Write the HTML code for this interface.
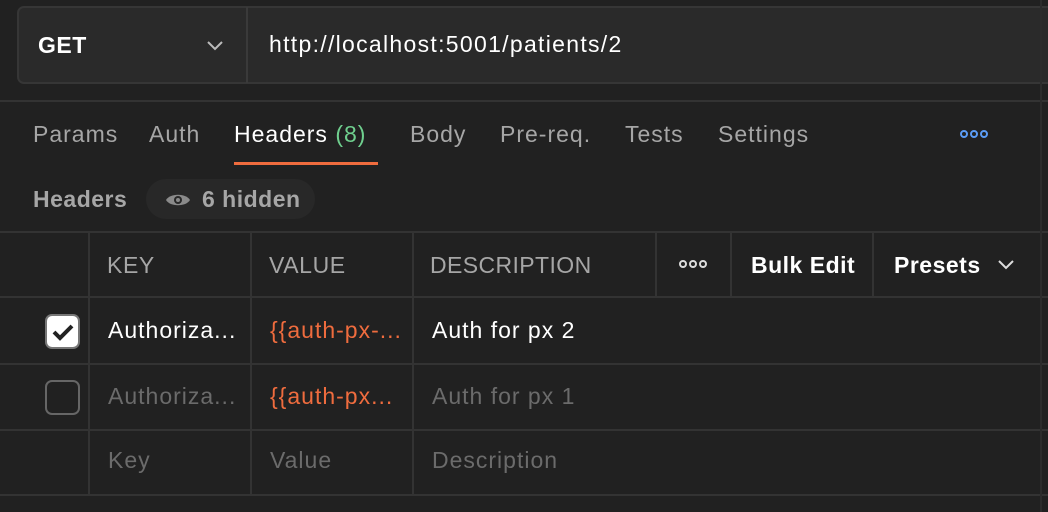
<!DOCTYPE html>
<html><head><style>
*{margin:0;padding:0;box-sizing:border-box}
body{width:1048px;height:512px;background:#212121;font-family:"Liberation Sans",sans-serif;color:#fff;position:relative;overflow:hidden}
.a{position:absolute;white-space:nowrap;letter-spacing:1px}
.a[style*="bold"]{letter-spacing:0.5px}
.hl{position:absolute;height:2px;background:#333}
.vl{position:absolute;width:2px;background:#333}
</style></head><body>
<div class="a" style="left:17px;top:6px;width:1050px;height:78px;background:#2a2a2a;border:2px solid #363636;border-radius:7px"></div>
<div class="vl" style="left:246px;top:7px;height:76px;background:#3a3a3a"></div>
<div class="a" style="left:38px;top:32px;font-size:23px;font-weight:bold">GET</div>
<svg class="a" style="left:206px;top:40px" width="18" height="12"><path d="M2 2l7 7 7-7" stroke="#bbb" stroke-width="2" fill="none"/></svg>
<div class="a" style="left:269px;top:31px;font-size:23px;letter-spacing:1.3px">http://localhost:5001/patients/2</div>
<div class="hl" style="left:0;top:100px;width:1048px"></div>
<div class="a" style="left:33px;top:121px;font-size:23px;color:#a6a6a6">Params</div>
<div class="a" style="left:149px;top:121px;font-size:23px;color:#a6a6a6">Auth</div>
<div class="a" style="left:234px;top:121px;font-size:23px">Headers <span style="color:#6fcf8e">(8)</span></div>
<div class="a" style="left:234px;top:162px;width:144px;height:3px;background:#ef6c3e"></div>
<div class="a" style="left:410px;top:121px;font-size:23px;color:#a6a6a6">Body</div>
<div class="a" style="left:500px;top:121px;font-size:23px;color:#a6a6a6">Pre-req.</div>
<div class="a" style="left:625px;top:121px;font-size:23px;color:#a6a6a6">Tests</div>
<div class="a" style="left:718px;top:121px;font-size:23px;color:#a6a6a6">Settings</div>
<svg class="a" style="left:959px;top:129px" width="30" height="10"><g fill="none" stroke="#5b9cf5" stroke-width="2"><circle cx="5" cy="5" r="3"/><circle cx="15" cy="5" r="3"/><circle cx="25" cy="5" r="3"/></g></svg>
<div class="a" style="left:33px;top:186px;font-size:23px;font-weight:bold;color:#a6a6a6">Headers</div>
<div class="a" style="left:146px;top:179px;width:169px;height:40px;background:#282828;border-radius:20px"></div>
<svg class="a" style="left:165px;top:191px" width="26" height="18"><path d="M1 9C5 2 21 2 25 9C21 16 5 16 1 9Z" fill="#8a8a8a"/><circle cx="13" cy="9" r="4" fill="#282828"/><circle cx="13" cy="9" r="2" fill="#8a8a8a"/></svg>
<div class="a" style="left:202px;top:186px;font-size:23px;font-weight:bold;color:#a6a6a6">6 hidden</div>
<div class="hl" style="left:0;top:231px;width:1048px"></div>
<div class="hl" style="left:0;top:296px;width:1048px"></div>
<div class="hl" style="left:0;top:363px;width:1048px"></div>
<div class="hl" style="left:0;top:429px;width:1048px"></div>
<div class="hl" style="left:0;top:494px;width:1048px"></div>
<div class="vl" style="left:88px;top:232px;height:264px"></div>
<div class="vl" style="left:250px;top:232px;height:264px"></div>
<div class="vl" style="left:412px;top:232px;height:264px"></div>
<div class="vl" style="left:655px;top:232px;height:65px"></div>
<div class="vl" style="left:730px;top:232px;height:65px"></div>
<div class="vl" style="left:872px;top:232px;height:65px"></div>
<div class="vl" style="left:1040px;top:0;height:512px;background:#2c2c2c"></div>
<div class="a" style="left:107px;top:252px;font-size:23px;color:#a6a6a6;letter-spacing:0.6px">KEY</div>
<div class="a" style="left:269px;top:252px;font-size:23px;color:#a6a6a6;letter-spacing:0.6px">VALUE</div>
<div class="a" style="left:430px;top:252px;font-size:23px;color:#a6a6a6;letter-spacing:0.4px">DESCRIPTION</div>
<svg class="a" style="left:678px;top:259px" width="30" height="10"><g fill="none" stroke="#ddd" stroke-width="2"><circle cx="5" cy="5" r="3"/><circle cx="15" cy="5" r="3"/><circle cx="25" cy="5" r="3"/></g></svg>
<div class="a" style="left:751px;top:252px;font-size:23px;font-weight:bold">Bulk Edit</div>
<div class="a" style="left:894px;top:252px;font-size:23px;font-weight:bold">Presets</div>
<svg class="a" style="left:997px;top:259px" width="18" height="12"><path d="M2 2l7 7 7-7" stroke="#ddd" stroke-width="2" fill="none"/></svg>
<div class="a" style="left:45px;top:314px;width:35px;height:35px;background:#fff;border:2px solid #777;border-radius:7px"></div>
<svg class="a" style="left:49px;top:318px" width="28" height="28"><path d="M5 14l6 6 12-12" stroke="#222" stroke-width="4" fill="none"/></svg>
<div class="a" style="left:108px;top:317px;font-size:23px">Authoriza...</div>
<div class="a" style="left:270px;top:317px;font-size:23px;color:#ef6c3e">{{auth-px-...</div>
<div class="a" style="left:432px;top:317px;font-size:23px">Auth for px 2</div>
<div class="a" style="left:45px;top:380px;width:35px;height:35px;border:2px solid #666;border-radius:7px"></div>
<div class="a" style="left:108px;top:383px;font-size:23px;color:#6b6b6b">Authoriza...</div>
<div class="a" style="left:270px;top:383px;font-size:23px;color:#ef6c3e">{{auth-px...</div>
<div class="a" style="left:432px;top:383px;font-size:23px;color:#6b6b6b">Auth for px 1</div>
<div class="a" style="left:108px;top:447px;font-size:23px;color:#6b6b6b">Key</div>
<div class="a" style="left:270px;top:447px;font-size:23px;color:#6b6b6b">Value</div>
<div class="a" style="left:432px;top:447px;font-size:23px;color:#6b6b6b">Description</div>
</body></html>
